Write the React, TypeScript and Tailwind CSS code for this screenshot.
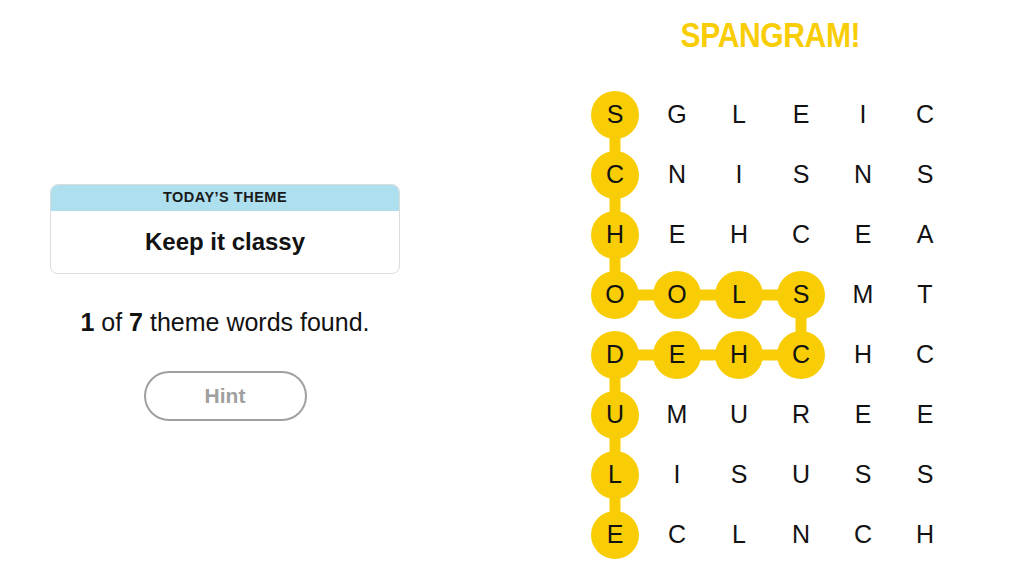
import React from "react";

const GRID = [
  "SGLEIC",
  "CNISNS",
  "HEHCEA",
  "OOLSMT",
  "DEHCHC",
  "UMUREE",
  "LISUSS",
  "ECLNCH",
];

// spangram path, as [row, col]
const PATH: [number, number][] = [
  [0, 0], [1, 0], [2, 0], [3, 0], [3, 1], [3, 2], [3, 3], [4, 3],
  [4, 2], [4, 1], [4, 0], [5, 0], [6, 0], [7, 0],
];

const CELL_W = 62;
const CELL_H = 60;

const onPath = (r: number, c: number) => PATH.some(([pr, pc]) => pr === r && pc === c);

function Board() {
  const cx = (c: number) => c * CELL_W + CELL_W / 2;
  const cy = (r: number) => r * CELL_H + CELL_H / 2;

  return (
    <div className="relative w-[372px] h-[480px]">
      <svg className="absolute inset-0" width={372} height={480}>
        {PATH.slice(1).map(([r, c], i) => {
          const [pr, pc] = PATH[i];
          return (
            <line key={i} x1={cx(pc)} y1={cy(pr)} x2={cx(c)} y2={cy(r)}
              stroke="#f8cd05" strokeWidth={11} />
          );
        })}
      </svg>
      <div className="relative grid grid-cols-6">
        {GRID.map((row, r) =>
          row.split("").map((ch, c) => (
            <div key={`${r}-${c}`} className="w-[62px] h-[60px] flex items-center justify-center">
              <div className={`w-[48px] h-[48px] rounded-full flex items-center justify-center text-[25px] text-[#121212] ${onPath(r, c) ? "bg-[#f8cd05]" : ""}`}>
                {ch}
              </div>
            </div>
          ))
        )}
      </div>
    </div>
  );
}

export default function App() {
  return (
    <div className="w-[1024px] h-[576px] bg-white flex font-['Liberation_Sans',Arial,sans-serif] text-[#121212]">
      <div className="w-[450px] shrink-0 flex flex-col items-center pt-[184px]">
        <div className="w-[350px] rounded-lg border border-[#dcdcdc] overflow-hidden">
          <div className="h-[26px] bg-[#aedfee] flex items-center justify-center text-[14.5px] font-bold tracking-[0.5px] text-[#1a1a1a]">
            TODAY’S THEME
          </div>
          <div className="h-[62px] flex items-center justify-center text-[24px] font-bold">
            Keep it classy
          </div>
        </div>
        <p className="mt-[33px] text-[25px] leading-[30px]">
          <span className="font-bold">1</span> of <span className="font-bold">7</span> theme words found.
        </p>
        <button className="mt-[34px] w-[163px] h-[50px] rounded-full border-2 border-[#a0a0a0] text-[21px] font-bold text-[#a0a0a0]">
          Hint
        </button>
      </div>
      <div className="flex-1 flex flex-col pl-[134px]">
        <div className="w-[372px] flex flex-col items-center">
          <h1 className="mt-[14px] h-[42px] text-[35px] leading-[42px] font-bold text-[#f8cd05] scale-x-[0.86] tracking-[-0.5px]">
            SPANGRAM!
          </h1>
          <div className="mt-[29px]">
            <Board />
          </div>
        </div>
      </div>
    </div>
  );
}
